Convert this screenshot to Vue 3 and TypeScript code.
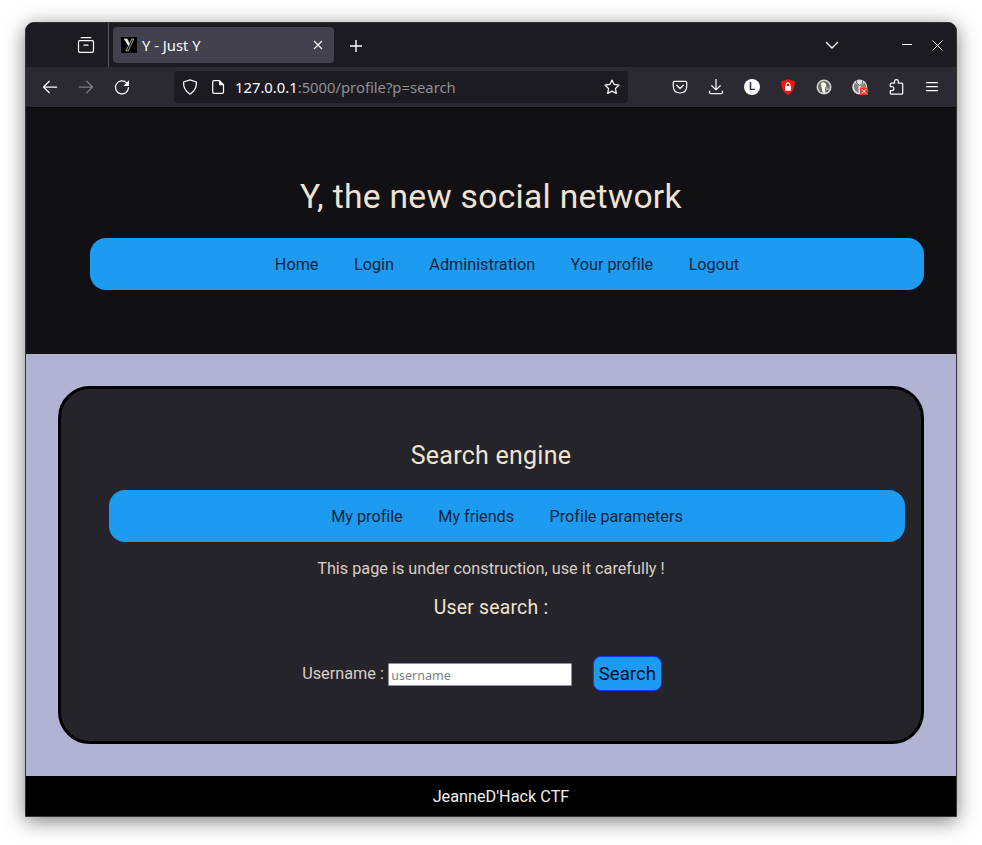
<script setup lang="ts">
const mainLinks: string[] = ['Home', 'Login', 'Administration', 'Your profile', 'Logout']
const profileLinks: string[] = ['My profile', 'My friends', 'Profile parameters']
</script>

<template>
  <div class="desktop">
    <div class="window">
      <div class="tabbar">
        <svg class="ico view" viewBox="0 0 18 18"><path d="M4.200 1.700h9.600M2.800 4.700h12.400q1.300 0 1.300 1.300v8.700q0 1.600-1.600 1.600H3.100q-1.600 0-1.600-1.600V6q0-1.300 1.300-1.300zM7 9.200h4" /></svg>
        <div class="divider"></div>
        <div class="tab">
          <svg class="favicon" viewBox="0 0 16 16">
            <rect width="16" height="16" fill="#000" />
            <path d="M3 2h3l2.500 5L7.500 9z" fill="#fff" />
            <path d="M3 2h3.200l2 4.800M12.800 2 7.200 13.800H4.800M11 2 5 13.800M10.700 2h2.200" fill="none" stroke="#ccc" stroke-width=".8" />
          </svg>
          <span class="tab-title">Y - Just Y</span>
          <svg class="tab-close" viewBox="0 0 10 10"><path d="M1 1l8 8M9 1 1 9" /></svg>
        </div>
        <svg class="plus" viewBox="0 0 14 14"><path d="M7 1v12M1 7h12" /></svg>
        <div class="grow"></div>
        <svg class="chevron" viewBox="0 0 14 8"><path d="M1 1l6 6 6-6" /></svg>
        <svg class="min" viewBox="0 0 10 10"><path d="M0 4.500h10" /></svg>
        <svg class="close" viewBox="0 0 11 11"><path d="M.5.5l10 10M10.500.5l-10 10" /></svg>
      </div>

      <div class="toolbar">
        <div class="history">
          <svg class="ico" viewBox="0 0 16 16"><path d="M14.700 8H1.800M7.300 2.300 1.500 8l5.800 5.700" /></svg>
          <svg class="ico dim" viewBox="0 0 16 16"><path d="M1.300 8h12.900M8.700 2.300 14.500 8l-5.800 5.700" /></svg>
          <svg class="ico" viewBox="0 0 16 16"><path d="M12.700 3.900A6.500 6.500 0 1 0 14.500 8.600" /><path class="solid" d="M15 1.200v5.200q0 .6-.6.6H9.500z" /></svg>
        </div>
        <div class="urlbar">
          <svg class="ico" viewBox="0 0 16 16"><path d="M8 .8 14.400 3q.5 7.800-6.400 12.200Q1.100 10.800 1.600 3z" /></svg>
          <svg class="ico page" viewBox="0 0 16 16"><path d="M4 1.700h5.500l4 4v7.300q0 1.300-1.300 1.300H4q-1.300 0-1.300-1.300V3q0-1.300 1.300-1.300z" /><path class="solid" d="M9 1.500v4.700h4.700z" /></svg>
          <span class="url"><span class="host">127.0.0.1</span>:5000/profile?p=search</span>
          <svg class="ico star" viewBox="0 0 16 16"><path d="M8 1.100 10.100 5.400l4.900.7-3.500 3.400.8 4.900L8 12.100l-4.300 2.300.8-4.900L1 6.100l4.900-.7z" /></svg>
        </div>
        <div class="actions">
          <svg class="ico" viewBox="0 0 16 16"><path d="M2.500 2.300h11q1.200 0 1.200 1.200V7.500q0 6.200-6.700 6.500Q1.300 13.700 1.300 7.500V3.500q0-1.200 1.200-1.200zM4.700 6.300 8 9.500l3.300-3.200" /></svg>
          <svg class="ico" viewBox="0 0 16 16"><path d="M8 .3v10.500M3.800 6.700 8 10.900l4.200-4.200M1.500 12v1.200q0 1.500 1.500 1.500h10q1.500 0 1.500-1.500V12" /></svg>
          <span class="avatar">L</span>
          <svg class="badge-ico" viewBox="0 0 16 16"><path d="M8 0q3.500 2 7 2-.1 10.500-7 14Q1.100 12.500 1 2q3.500 0 7-2z" fill="#f01515" /><rect x="5" y="7" width="6" height="4.700" rx=".5" fill="#fff" /><path d="M6.100 7V5.700a1.900 1.900 0 0 1 3.800 0V7" fill="none" stroke="#fff" stroke-width="1.200" /></svg>
          <svg class="badge-ico" viewBox="0 0 16 16"><circle cx="8" cy="8" r="7.500" fill="#d2d2ce" /><circle cx="8" cy="8" r="5.900" fill="#6b6860" /><path d="M5 4.200q3-2 5 .7l.3 2.600-1.500 1.300.8 4.900-3 .1L5.500 8z" fill="#fff" /><path d="M9.500 8.500h3v2.500h-2.600z" fill="#aaa" /></svg>
          <svg class="badge-ico" viewBox="0 0 16 16"><circle cx="7.700" cy="8" r="7.500" fill="#e0e0de" /><path d="M2.800 3.800Q.8 8 3.400 12l3.200 2V6.500zM12.600 3.800q2 2.200 1.500 5L8.800 8.500v-2z" fill="#85837f" /><path d="M4.600 1.200v3l3 2.300 3-2.300v-3" fill="none" stroke="#55534f" stroke-width=".9" /><rect x="8" y="8.500" width="8" height="7.500" fill="#df3e31" /><path d="M10 10.300l4 4M14 10.300l-4 4" stroke="#fff" stroke-width="1" /></svg>
          <svg class="ico" viewBox="0 0 16 16"><path d="M2.300 7.500V5q0-1 1-1H6.500V2.500a1.900 1.900 0 0 1 3.800 0V4h3.400q1 0 1 1v9.200q0 1-1 1H3.300q-1 0-1-1V11.600h1.700q1.900 0 1.900-2T4 7.500z" /></svg>
          <svg class="ico" viewBox="0 0 16 16"><path d="M2.500 3.500h11M2.500 7.500h11M2.500 11.500h11" /></svg>
        </div>
      </div>

      <div class="site">
        <header class="hero">
          <h1>Y, the new social network</h1>
          <nav class="nav">
            <a v-for="l in mainLinks" :key="l">{{ l }}</a>
          </nav>
        </header>
        <main class="content">
          <section class="card">
            <h2>Search engine</h2>
            <nav class="nav">
              <a v-for="l in profileLinks" :key="l">{{ l }}</a>
            </nav>
            <p>This page is under construction, use it carefully !</p>
            <h3>User search :</h3>
            <form class="form" @submit.prevent>
              <label for="user">Username :</label>
              <input id="user" type="text" placeholder="username" />
              <button type="submit">Search</button>
            </form>
          </section>
        </main>
        <footer class="footer">JeanneD'Hack CTF</footer>
      </div>
    </div>
  </div>
</template>

<style>
body { background: #fff; }
</style>

<style scoped>
* { box-sizing: border-box; }
.desktop { height: 845px; padding: 22px 25px 28px; overflow: hidden; }
.window {
  width: 932px; height: 795px; border: 1px solid #343434; border-radius: 9px 9px 0 0;
  overflow: hidden; display: flex; flex-direction: column; background: #000;
  box-shadow: 0 4px 20px rgba(0, 0, 0, .52);
}
svg { flex: none; display: block; fill: none; stroke: #fbfbfe; }
.ico { width: 16px; height: 16px; stroke-width: 1.25; stroke-linecap: round; stroke-linejoin: round; }
.solid { fill: #fbfbfe; stroke: none; }
.badge-ico { width: 16px; height: 16px; stroke: none; }
.grow { flex: 1; }
.tabbar { height: 44px; flex: none; background: #1c1b22; display: flex; align-items: center; padding-right: 13px; }
.view { width: 18px; height: 18px; margin-left: 51px; }
.divider { width: 1px; height: 44px; background: #58575e; margin: 0 4px 0 13px; }
.tab {
  width: 221px; height: 36px; border-radius: 4px; background: #42414d; display: flex;
  align-items: center; padding: 0 11px 0 8px; font: 14.8px "Noto Sans", sans-serif; color: #fbfbfe;
}
.favicon { width: 16px; height: 16px; margin-right: 5px; stroke: none; }
.tab-title { flex: 1; }
.tab-close { width: 10px; height: 10px; stroke-width: 1.1; }
.plus { width: 14px; height: 14px; margin: 1px 0 0 15px; stroke-width: 1.4; }
.chevron { width: 14px; height: 8px; stroke-width: 1.4; margin-right: 63px; }
.min { width: 10px; height: 10px; margin-right: 20px; stroke-width: 1; }
.close { width: 11px; height: 11px; stroke-width: 1; }
.toolbar { height: 40px; flex: none; background: #2b2a33; display: flex; align-items: center; padding: 0 16px; }
.history { display: flex; gap: 20px; width: 132px; }
.dim { opacity: .4; }
.urlbar { width: 454px; height: 32px; border-radius: 4px; background: #1c1b22; display: flex; align-items: center; padding: 0 8px; }
.page { margin: 0 9px 0 12px; }
.url { flex: 1; font: 14.8px "Noto Sans", sans-serif; color: #8f8f94; }
.host { color: #fbfbfe; }
.actions { display: flex; gap: 20px; margin-left: 44px; align-items: center; }
.avatar {
  width: 16px; height: 16px; border-radius: 50%; background: #fff; color: #2b2a33;
  font: bold 10px/16px "Liberation Sans", sans-serif; text-align: center;
}
.site { flex: 1; display: flex; flex-direction: column; font: 16.25px/20px Roboto, sans-serif; }
.hero { height: 247px; background: #111015; padding: 69px 32px 0 64px; border-top: 1px solid #08080a; }
h1, h2, h3 { margin: 0; font-weight: 400; color: #f0e3d0; text-align: center; }
h1 { font-size: 33.6px; line-height: 40px; letter-spacing: .3px; margin: 0 0 21px -32px; }
.nav {
  height: 52px; border-radius: 16px; background: #1d9bf0; display: flex; justify-content: center;
  align-items: center; gap: 35.5px; color: #0b2540; padding-top: 1px; letter-spacing: -.03px;
}
.content { height: 422px; background: #b2b2d3; padding: 32px; }
.card { height: 358px; background: #25242a; border: 3px solid #000; border-radius: 32px; padding: 52px 16px 0 48px; }
h2 { font-size: 25px; line-height: 30px; letter-spacing: .25px; margin: 0 0 19px -32px; }
p { margin: 17px 0 16px -32px; text-align: center; color: #d9cfc2; }
h3 { font-size: 19.4px; line-height: 24px; letter-spacing: .22px; margin: 17px 0 0 -32px; }
.form { display: flex; align-items: center; justify-content: center; margin: 36px 0 0 -50px; color: #d9cfc2; }
label { padding-top: 1px; }
input {
  width: 184px; height: 23px; margin: 2px 21px 0 4px; padding: 2px 3px 1px 2.5px; border: 1px solid #8f8f9d;
  border-radius: 1px; background: #fff; font: 12.5px "Noto Sans", sans-serif;
}
input::placeholder { color: #808080; opacity: 1; }
button {
  width: 69px; height: 35px; padding: 0; border: 1px solid #0f3cff; border-radius: 8px;
  background: #1d9bf0; color: #040c18; font: 18.6px Roboto, sans-serif;
}
.footer { flex: 1; background: #000; color: #f0f0f0; text-align: center; line-height: 41px; padding-left: 20px; }
</style>
